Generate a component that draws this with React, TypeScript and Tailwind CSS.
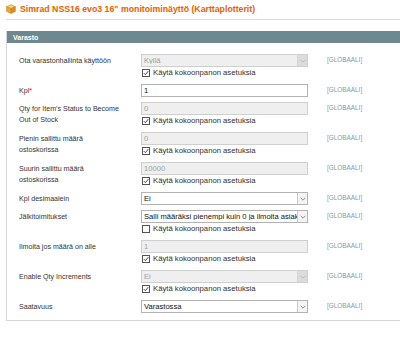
import React from 'react'

type Row = {
  label: string[]
  required?: boolean
  kind: 'input' | 'select'
  value: string
  disabled?: boolean
  useDefault?: boolean | null // null = no checkbox line
}

const ROWS: Row[] = [
  { label: ['Ota varastonhallinta käyttöön'], kind: 'select', value: 'Kyllä', disabled: true, useDefault: true },
  { label: ['Kpl'], required: true, kind: 'input', value: '1', useDefault: null },
  { label: ["Qty for Item's Status to Become", 'Out of Stock'], kind: 'input', value: '0', disabled: true, useDefault: true },
  { label: ['Pienin sallittu määrä', 'ostoskorissa'], kind: 'input', value: '0', disabled: true, useDefault: true },
  { label: ['Suurin sallittu määrä', 'ostoskorissa'], kind: 'input', value: '10000', disabled: true, useDefault: true },
  { label: ['Kpl desimaalein'], kind: 'select', value: 'Ei', useDefault: null },
  { label: ['Jälkitoimitukset'], kind: 'select', value: 'Salli määräksi pienempi kuin 0 ja ilmoita asiak', useDefault: false },
  { label: ['Ilmoita jos määrä on alle'], kind: 'input', value: '1', disabled: true, useDefault: true },
  { label: ['Enable Qty Increments'], kind: 'select', value: 'Ei', disabled: true, useDefault: true },
  { label: ['Saatavuus'], kind: 'select', value: 'Varastossa', useDefault: null },
]

function BoxIcon() {
  return (
    <svg width="10" height="10" viewBox="0 0 10 10" className="shrink-0">
      <path d="M5 0.6 L9.4 2.6 L5 4.6 L0.6 2.6 Z" fill="#f7d27a" stroke="#c98a1c" strokeWidth="0.6" />
      <path d="M0.6 2.6 L5 4.6 L5 9.4 L0.6 7.4 Z" fill="#e9a93a" stroke="#c98a1c" strokeWidth="0.6" />
      <path d="M9.4 2.6 L5 4.6 L5 9.4 L9.4 7.4 Z" fill="#d88f22" stroke="#c98a1c" strokeWidth="0.6" />
    </svg>
  )
}

function Checkbox({ checked }: { checked: boolean }) {
  return (
    <span className="flex h-[8px] w-[8px] shrink-0 items-center justify-center border border-[#555] bg-white">
      {checked && (
        <svg width="6" height="6" viewBox="0 0 6 6">
          <path d="M0.8 3.1 L2.4 4.7 L5.3 1.1" fill="none" stroke="#333" strokeWidth="0.9" />
        </svg>
      )}
    </span>
  )
}

function Field({ row }: { row: Row }) {
  const dis = row.disabled
  return (
    <div
      className={
        'flex h-[13px] w-[167px] items-center overflow-hidden border ' +
        (dis ? 'border-[#cfcfcf] bg-[#efefef] text-[#a0a0a0]' : 'border-[#b3b3b3] bg-white text-[#111]')
      }
    >
      <span className="min-w-0 flex-1 overflow-hidden whitespace-nowrap pl-[2px] text-[7.6px] leading-none">{row.value}</span>
      {row.kind === 'select' && (
        <span
          className={
            'flex h-[11px] w-[10px] shrink-0 items-center justify-center border-l ' +
            (dis ? 'border-[#d4d4d4] bg-[#dcdcdc]' : 'border-[#c8c8c8] bg-[#f4f4f4]')
          }
        >
          <svg width="6" height="4" viewBox="0 0 6 4">
            <path d="M0.6 0.8 L3 3.2 L5.4 0.8" fill="none" stroke={dis ? '#b0b0b0' : '#777'} strokeWidth="0.8" />
          </svg>
        </span>
      )}
    </div>
  )
}

export default function App() {
  return (
    <div className="h-[337px] w-[400px] overflow-hidden bg-white font-['Liberation_Sans',Arial,sans-serif]">
      {/* page title */}
      <div className="ml-[6px] flex h-[20px] items-center gap-[4px] border-b border-[#dcdcdc] pb-[1px]">
        <BoxIcon />
        <span className="text-[8.75px] font-bold leading-none text-[#eb5e00]">
          Simrad NSS16 evo3 16" monitoiminäyttö (Karttaplotterit)
        </span>
      </div>

      {/* Varasto fieldset */}
      <div className="ml-[6px] mt-[11px] border-b border-l border-[#d6d6d6]">
        <div className="flex h-[12px] items-center bg-[#6e888f] pl-[6px] text-[7px] font-bold leading-none text-white">
          Varasto
        </div>
        <div className="flex flex-col gap-[5px] pb-[7px] pt-[11px]">
          {ROWS.map((row, i) => (
            <div key={i} className="flex items-start">
              <div className="w-[134px] shrink-0 pl-[12px] pt-[2px] text-[7.1px] leading-[11px] text-[#333]">
                {row.label.map((l, j) => (
                  <div key={j}>
                    {l}
                    {row.required && <span className="text-[#e41101]">*</span>}
                  </div>
                ))}
              </div>
              <div className="flex w-[167px] shrink-0 flex-col">
                <Field row={row} />
                {row.useDefault !== null && row.useDefault !== undefined && (
                  <label className="flex h-[12px] items-center gap-[3px] pl-[1px] text-[7.7px] leading-none text-[#2f2f2f]">
                    <Checkbox checked={row.useDefault} />
                    Käytä kokoonpanon asetuksia
                  </label>
                )}
              </div>
              <div className="ml-[19px] pt-[3px] text-[6.4px] leading-none text-[#8797a8]">[GLOBAALI]</div>
            </div>
          ))}
        </div>
      </div>
    </div>
  )
}
